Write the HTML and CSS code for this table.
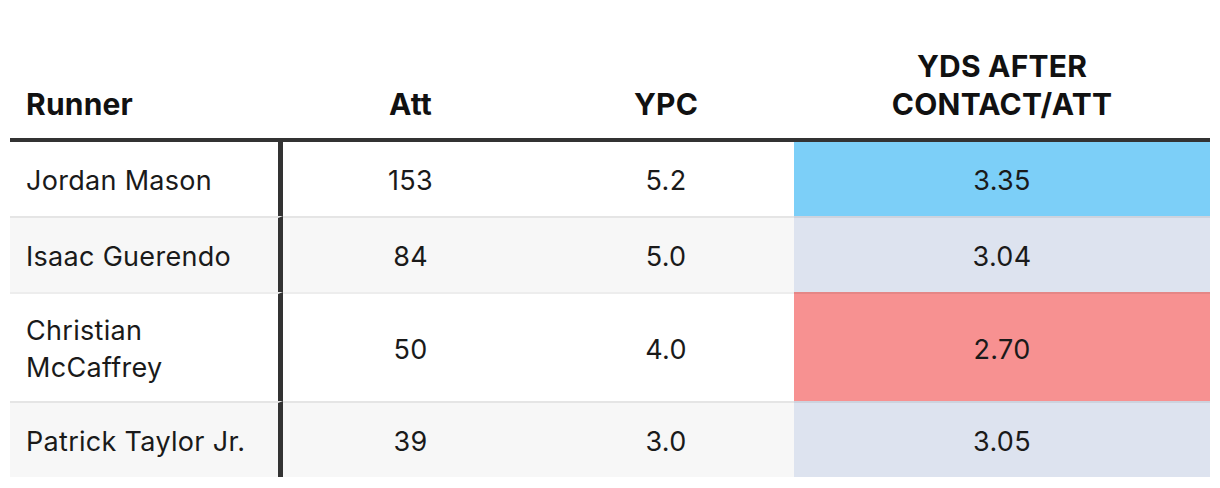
FILE: index.html
```html
<!DOCTYPE html>
<html lang="en">
<head>
<meta charset="utf-8">
<title>Runners</title>
<link rel="stylesheet" href="styles.css">
</head>
<body>
<div class="wrap">
  <table class="stats">
    <colgroup>
      <col class="c-name">
      <col class="c-att">
      <col class="c-ypc">
      <col class="c-yac">
    </colgroup>
    <thead>
      <tr>
        <th class="left">Runner</th>
        <th>Att</th>
        <th>YPC</th>
        <th>YDS AFTER<br>CONTACT/ATT</th>
      </tr>
    </thead>
    <tbody>
      <tr>
        <td class="left">Jordan Mason</td>
        <td>153</td>
        <td>5.2</td>
        <td class="hi">3.35</td>
      </tr>
      <tr class="alt">
        <td class="left">Isaac Guerendo</td>
        <td>84</td>
        <td>5.0</td>
        <td class="mid">3.04</td>
      </tr>
      <tr>
        <td class="left">Christian<br>McCaffrey</td>
        <td>50</td>
        <td>4.0</td>
        <td class="lo">2.70</td>
      </tr>
      <tr class="alt">
        <td class="left">Patrick Taylor Jr.</td>
        <td>39</td>
        <td>3.0</td>
        <td class="mid">3.05</td>
      </tr>
    </tbody>
  </table>
</div>
</body>
</html>
```

FILE: styles.css
```css
html, body {
  margin: 0;
  padding: 0;
  background: #ffffff;
}

body {
  font-family: Inter, "Noto Sans", "Liberation Sans", sans-serif;
  color: #1a1a1a;
}

.wrap {
  padding: 33px 10px 0 10px;
}

.stats {
  width: 1200px;
  table-layout: fixed;
  border-collapse: separate;
  border-spacing: 0;
}

.c-name { width: 273px; }
.c-att { width: 255px; }
.c-ypc { width: 256px; }
.c-yac { width: 416px; }

.stats th {
  font-size: 30px;
  font-weight: 700;
  line-height: 38px;
  letter-spacing: 0.2px;
  color: #111111;
  text-align: center;
  vertical-align: bottom;
  padding: 14px 16px 15px 16px;
  border-bottom: 4px solid #333333;
}

.stats td {
  box-sizing: border-box;
  height: 74px;
  font-size: 27px;
  font-weight: 400;
  line-height: 37px;
  letter-spacing: 0.3px;
  text-align: center;
  vertical-align: middle;
  padding: 18px 16px 15px 16px;
  background-clip: border-box;
}

.stats tbody tr + tr td {
  height: 76px;
  border-top: 2px solid rgba(0, 0, 0, 0.07);
}

.stats .left {
  text-align: left;
}

.stats td.left {
  border-right: 5px solid #333333;
}

.stats tr.alt td {
  background-color: #f7f7f7;
}

.stats td.hi {
  background-color: #7ccff8;
}

.stats tr.alt td.mid,
.stats td.mid {
  background-color: #dde3ef;
}

.stats td.lo {
  background-color: #f79191;
}
```
